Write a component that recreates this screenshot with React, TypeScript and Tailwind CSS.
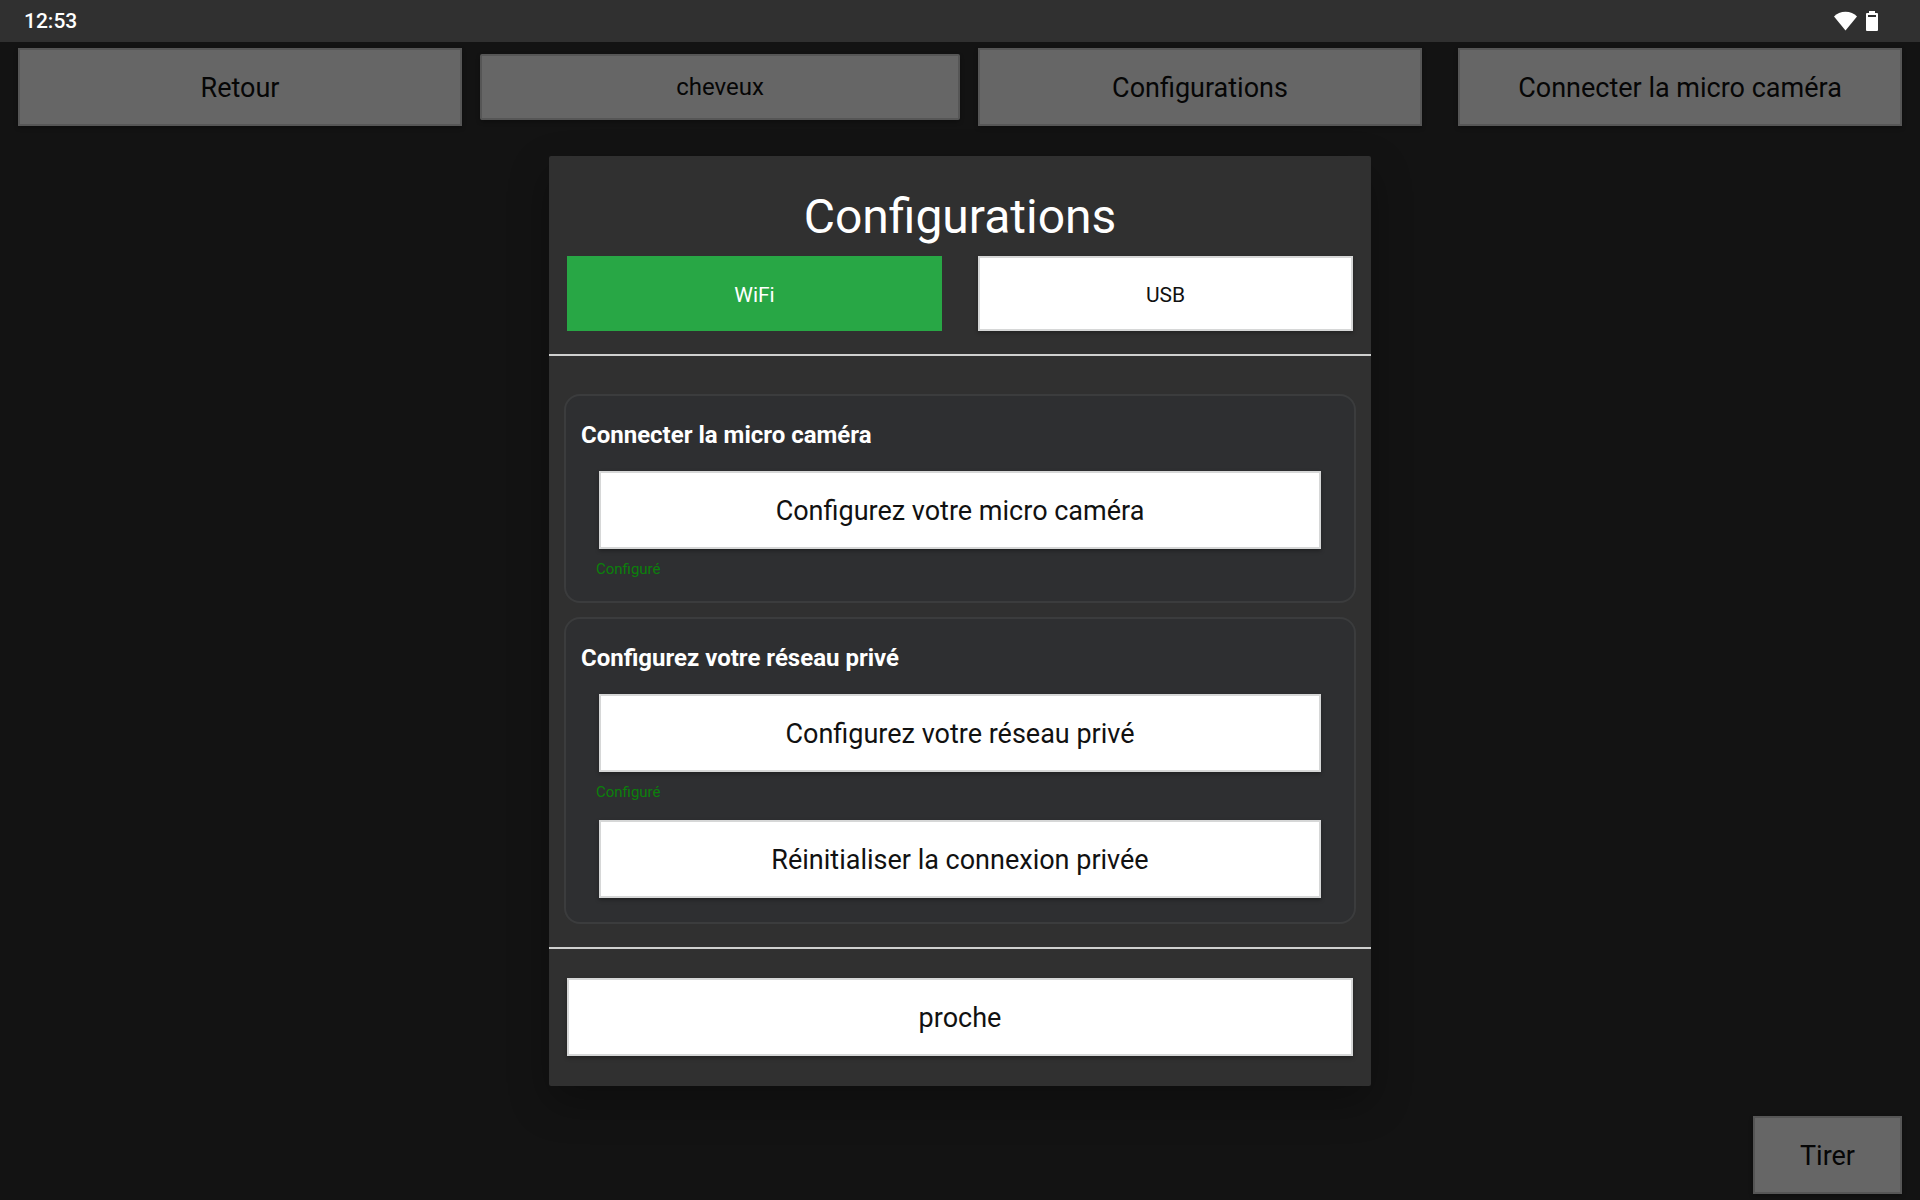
import type { ReactNode } from 'react';
import clsx from 'clsx';

type ButtonProps = {
  children: ReactNode;
  className?: string;
};

const buttonBase =
  'border-2 border-[#d6d7d7] bg-white text-center text-[#111] shadow-[0_2px_4px_rgba(0,0,0,0.3)]';

function Button({ children, className }: ButtonProps) {
  return (
    <button type="button" className={clsx(buttonBase, 'h-[78px] pt-[2px] text-[27px]', className)}>
      {children}
    </button>
  );
}

function StatusBar() {
  return (
    <header className="flex h-[42px] items-center justify-between bg-[#303030] pl-6 pr-[42px] text-white">
      <span className="pt-[2px] text-[21px] font-medium">12:53</span>
      <div className="flex items-center gap-[9px]">
        <svg viewBox="0 0 23 20" className="h-5 w-[23px]" fill="currentColor" aria-hidden="true">
          <path d="M11.5 19.5 0 5.5C2.6 2.5 7 .7 11.5 .7S20.4 2.5 23 5.5Z" />
        </svg>
        <svg viewBox="0 0 12 20" className="h-5 w-3" fill="currentColor" aria-hidden="true">
          <path
            fillRule="evenodd"
            d="M3 0h6v2h2a1 1 0 0 1 1 1v16a1 1 0 0 1-1 1H1a1 1 0 0 1-1-1V3a1 1 0 0 1 1-1h2ZM2 4v2h8V4Z"
          />
        </svg>
      </div>
    </header>
  );
}

function Toolbar() {
  return (
    <nav className="grid grid-cols-4 items-center pt-[6px]">
      <Button className="mx-[18px]">Retour</Button>
      <button type="button" className={clsx(buttonBase, 'h-[66px] rounded-xs text-2xl')}>
        cheveux
      </button>
      <Button className="mx-[18px]">Configurations</Button>
      <Button className="mx-[18px]">Connecter la micro caméra</Button>
    </nav>
  );
}

function Card({ title, children }: { title: string; children: ReactNode }) {
  return (
    <section className="flex flex-col rounded-2xl border-2 border-[#3b3c3d] bg-[#2e2f31] px-[15px] pt-[23px] pb-[14px]">
      <h2 className="mb-[10px] text-2xl font-bold text-white">{title}</h2>
      {children}
    </section>
  );
}

function Status({ children }: { children: ReactNode }) {
  return <p className="mb-2 ml-[15px] text-[15px] leading-5 text-[#0b800b]">{children}</p>;
}

function ConfigDialog() {
  return (
    <div
      role="dialog"
      aria-modal="true"
      aria-labelledby="dialog-title"
      className="w-full max-w-[822px] rounded-xs bg-[#303030] shadow-[0_16px_40px_rgba(0,0,0,0.3)]"
    >
      <div className="border-b-2 border-[#cfd0cf] px-[18px] pt-[33px] pb-[23px]">
        <h1 id="dialog-title" className="mb-[11px] text-center text-5xl leading-14 text-white">
          Configurations
        </h1>
        <div className="grid grid-cols-2 gap-9">
          <button type="button" className="h-[75px] bg-[#28a745] pt-1 text-[21px] text-white">
            WiFi
          </button>
          <button type="button" className={clsx(buttonBase, 'h-[75px] pt-1 text-[21px]')}>
            USB
          </button>
        </div>
      </div>

      <div className="flex flex-col gap-[14px] border-b-2 border-[#cfd0cf] px-[15px] pt-[38px] pb-[23px]">
        <Card title="Connecter la micro caméra">
          <Button className="mx-[18px] my-[10px]">Configurez votre micro caméra</Button>
          <Status>Configuré</Status>
        </Card>
        <Card title="Configurez votre réseau privé">
          <Button className="mx-[18px] my-[10px]">Configurez votre réseau privé</Button>
          <Status>Configuré</Status>
          <Button className="mx-[18px] my-[10px]">Réinitialiser la connexion privée</Button>
        </Card>
      </div>

      <div className="flex flex-col px-[18px] pt-[29px] pb-[30px]">
        <Button>proche</Button>
      </div>
    </div>
  );
}

export default function App() {
  return (
    <div className="flex min-h-screen flex-col bg-[#303030] font-['Roboto',sans-serif]">
      <StatusBar />
      <main className="relative flex flex-1 flex-col justify-between">
        <Toolbar />
        <div className="flex justify-end px-[18px] pb-[6px]">
          <Button className="px-[45px]">Tirer</Button>
        </div>

        {/* Dimmed backdrop with the dialog on top */}
        <div className="absolute inset-0 flex items-center justify-center bg-black/60">
          <ConfigDialog />
        </div>
      </main>
    </div>
  );
}
